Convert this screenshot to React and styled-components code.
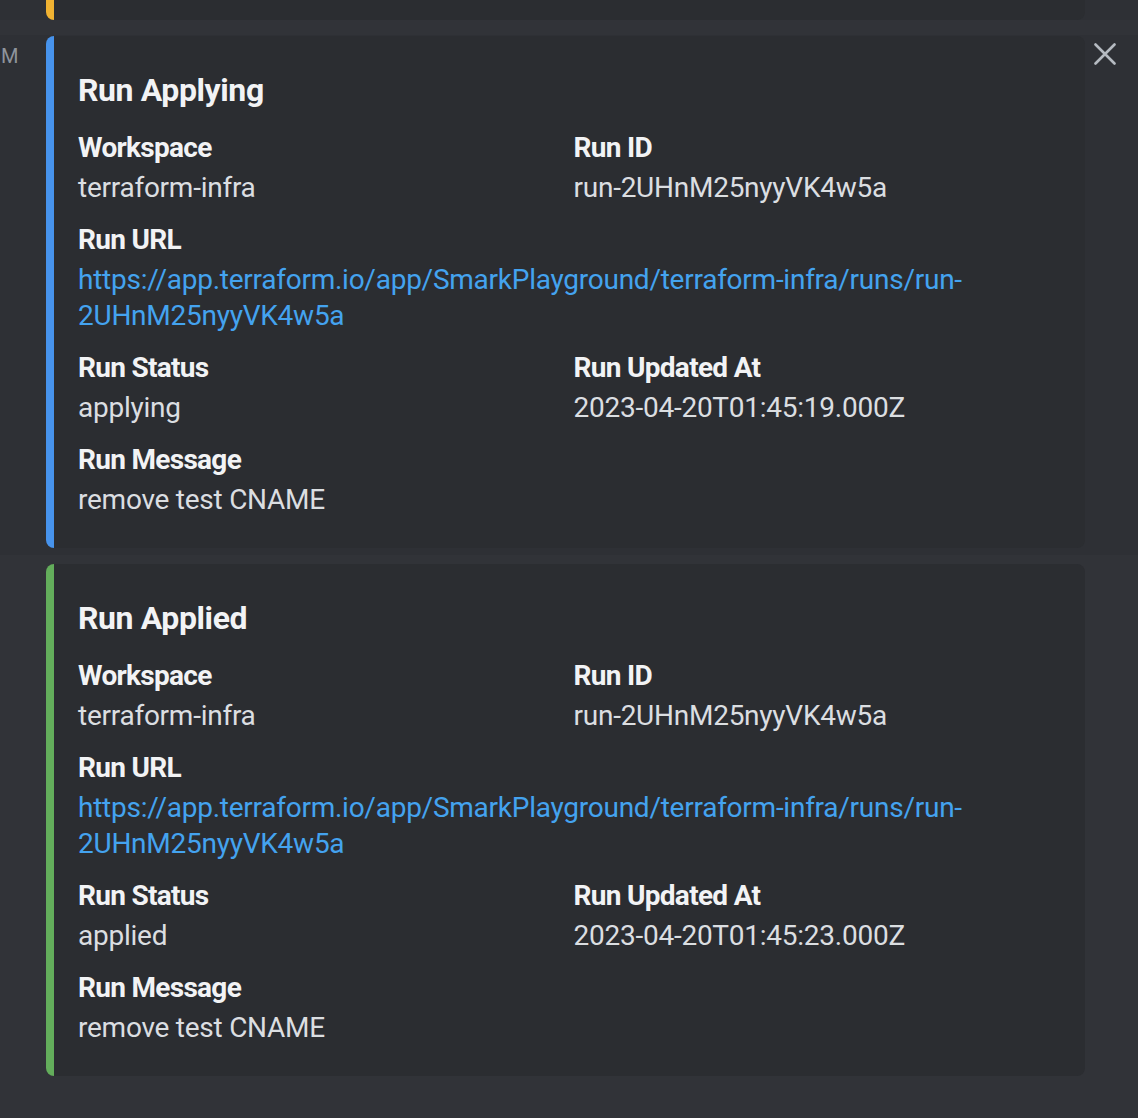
import React from "react";
import styled, { createGlobalStyle } from "styled-components";

const GlobalStyle = createGlobalStyle`
  html, body {
    margin: 0;
    padding: 0;
    background: #313338;
  }
  body {
    font-family: Roboto, "Noto Sans", sans-serif;
    color: #dbdee1;
    -webkit-font-smoothing: antialiased;
  }
`;

const Page = styled.div`
  width: 1138px;
  height: 1118px;
  overflow: hidden;
  display: flex;
  flex-direction: column;
  background: #313338;
`;

const Message = styled.div`
  display: flex;
  align-items: flex-start;
  background: ${(p) => (p.$hovered ? "#2e3035" : "transparent")};
  padding: ${(p) => p.$pad || "0"};
  margin-bottom: ${(p) => p.$after || "0"};
`;

const Gutter = styled.div`
  width: 46px;
  flex: none;
  display: flex;
`;

const Timestamp = styled.div`
  margin-top: 7px;
  padding-left: 1px;
  white-space: nowrap;
  font-size: 20px;
  line-height: 26px;
  color: #8e949c;
`;

const Embed = styled.article`
  width: 1039px;
  box-sizing: border-box;
  flex: none;
  background: #2b2d31;
  border-left: 8px solid ${(p) => p.$accent};
  border-radius: 8px;
  padding: 16px 32px 30px 24px;
`;

const EmbedStub = styled.div`
  width: 1039px;
  height: 20px;
  box-sizing: border-box;
  flex: none;
  background: #2b2d31;
  border-left: 8px solid ${(p) => p.$accent};
  border-radius: 0 0 8px 8px;
`;

const Title = styled.h2`
  margin: 16px 0 0;
  font-size: 32px;
  line-height: 44px;
  font-weight: 700;
  letter-spacing: -0.4px;
  color: #f2f3f5;
`;

const Fields = styled.div`
  margin-top: 18px;
  display: grid;
  grid-template-columns: 1fr 1fr;
  column-gap: 16px;
  row-gap: 16px;
`;

const Field = styled.div`
  grid-column: ${(p) => (p.$inline ? "auto" : "1 / -1")};
  min-width: 0;
`;

const FieldName = styled.div`
  font-size: 28px;
  line-height: 36px;
  font-weight: 700;
  letter-spacing: -0.7px;
  color: #f2f3f5;
  margin-bottom: 4px;
`;

const FieldValue = styled.div`
  font-size: 28px;
  line-height: 36px;
  font-weight: 400;
  letter-spacing: -0.25px;
  color: #dbdee1;
`;

const Link = styled.a`
  color: #44a3ef;
  text-decoration: none;
`;

const CloseButton = styled.button`
  flex: none;
  width: 40px;
  height: 34px;
  margin-top: 1px;
  padding: 0;
  border: 0;
  background: transparent;
  display: flex;
  align-items: center;
  justify-content: center;
  color: #b5bac1;
  cursor: pointer;
`;

const XIcon = () => (
  <svg width="22" height="22" viewBox="0 0 22 22" fill="none">
    <path
      d="M1.5 1.5 L20.5 20.5 M20.5 1.5 L1.5 20.5"
      stroke="currentColor"
      strokeWidth="2.6"
      strokeLinecap="round"
    />
  </svg>
);

const URL_HEAD = "https://app.terraform.io/app/SmarkPlayground/terraform-infra/runs/run-";
const RUN_ID = "2UHnM25nyyVK4w5a";

const RunEmbed = ({ accent, title, status, updatedAt }) => (
  <Embed $accent={accent}>
    <Title>{title}</Title>
    <Fields>
      <Field $inline>
        <FieldName>Workspace</FieldName>
        <FieldValue>terraform-infra</FieldValue>
      </Field>
      <Field $inline>
        <FieldName>Run ID</FieldName>
        <FieldValue>run-{RUN_ID}</FieldValue>
      </Field>
      <Field>
        <FieldName>Run URL</FieldName>
        <FieldValue>
          <Link href="#">
            {URL_HEAD}
            <wbr />
            {RUN_ID}
          </Link>
        </FieldValue>
      </Field>
      <Field $inline>
        <FieldName>Run Status</FieldName>
        <FieldValue>{status}</FieldValue>
      </Field>
      <Field $inline>
        <FieldName>Run Updated At</FieldName>
        <FieldValue>{updatedAt}</FieldValue>
      </Field>
      <Field>
        <FieldName>Run Message</FieldName>
        <FieldValue>remove test CNAME</FieldValue>
      </Field>
    </Fields>
  </Embed>
);

export default function App() {
  return (
    <>
      <GlobalStyle />
      <Page>
        <Message $hovered $after="15px">
          <Gutter />
          <EmbedStub $accent="#f0b232" />
        </Message>
        <Message $hovered $pad="1px 0 7px">
          <Gutter>
            <Timestamp>M</Timestamp>
          </Gutter>
          <RunEmbed
            accent="#4793ec"
            title="Run Applying"
            status="applying"
            updatedAt="2023-04-20T01:45:19.000Z"
          />
          <CloseButton aria-label="Remove embeds">
            <XIcon />
          </CloseButton>
        </Message>
        <Message $pad="9px 0 0">
          <Gutter />
          <RunEmbed
            accent="#63ad5b"
            title="Run Applied"
            status="applied"
            updatedAt="2023-04-20T01:45:23.000Z"
          />
        </Message>
      </Page>
    </>
  );
}
